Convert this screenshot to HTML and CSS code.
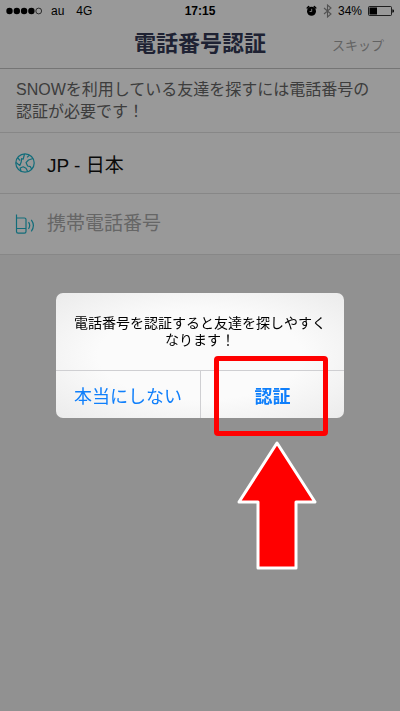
FILE: index.html
```html
<!DOCTYPE html>
<html lang="ja">
<head>
  <meta charset="UTF-8">
  <meta name="viewport" content="width=device-width, initial-scale=1">
  <title>電話番号認証</title>
  <link rel="stylesheet" href="styles.css">
</head>
<body>
  <div class="status-bar">
    <div class="status-left">
      <svg class="signal" width="37" height="8" viewBox="0 0 37 8">
        <circle cx="3.5" cy="4" r="3.2"/>
        <circle cx="10.8" cy="4" r="3.2"/>
        <circle cx="18.1" cy="4" r="3.2"/>
        <circle cx="25.4" cy="4" r="3.2"/>
        <circle cx="32.7" cy="4" r="2.9" fill="none" stroke="#000" stroke-width="0.7"/>
      </svg>
      <span>au</span>
      <span class="network">4G</span>
    </div>
    <div class="clock">17:15</div>
    <div class="status-right">
      <svg width="11" height="12" viewBox="0 0 11 12">
        <circle cx="5.5" cy="6.2" r="4.5"/>
        <path d="M1.200 3 2.700 1.600M9.800 3 8.300 1.600" stroke="#000" stroke-width="1.5" stroke-linecap="round"/>
        <path d="M5.700 3.800v2.700H3.600" fill="none" stroke="#ddd" stroke-width="0.9"/>
      </svg>
      <svg class="bluetooth" width="9" height="14" viewBox="0 0 9 14">
        <path d="M1 4l7 6-3.5 3V1L8 4 1 10" fill="none" stroke="#888" stroke-width="1.1"/>
      </svg>
      <span>34%</span>
      <svg class="battery" width="26" height="10" viewBox="0 0 26 10">
        <rect x=".5" y=".5" width="23" height="9" rx="1" fill="none" stroke="#000" stroke-width="0.8"/>
        <rect x="1.5" y="1.5" width="7.5" height="7"/>
        <path d="M24.4 3.2q1.6.2 1.6 1.8t-1.6 1.8z"/>
      </svg>
    </div>
  </div>

  <header class="nav">
    <h1>電話番号認証</h1>
    <button class="skip" type="button">スキップ</button>
  </header>

  <main class="form">
    <p class="lead">SNOWを利用している友達を探すには電話番号の認証が必要です！</p>
    <button class="row country" type="button">
      <svg width="20" height="20" viewBox="0 0 20 20">
        <circle cx="10" cy="10" r="9.200"/>
        <path d="M9.500 1 8.200 6.200 6.600 5.600 6.200 9 4.800 12.500 1 9.500M2.800 4.800 5 7.500M18 5.500 13.500 7 11 9.600 12.600 13 15.300 13.600 16.800 16.200M6 18.300 5.200 15 8.200 13.800 11 15.200 12.800 18.700M14.500 2.100 12 4.400"/>
      </svg>
      <span>JP - 日本</span>
    </button>
    <label class="row">
      <svg width="20" height="20" viewBox="0 0 20 20">
        <path d="M1.500 .5v17a1.600 1.600 0 0 0 1.600 1.600h6.300a1.600 1.600 0 0 0 1.600-1.600V5.600A1.600 1.600 0 0 0 9.400 4H1.500M1.500 14.500H11M13.500 8.200q2.400 3.400 0 6.800M16.300 5.800q4.200 5.800 0 11.600"/>
      </svg>
      <input type="tel" placeholder="携帯電話番号" aria-label="携帯電話番号">
    </label>
  </main>

  <div class="overlay">
    <div class="dialog" role="alertdialog" aria-labelledby="msg">
      <p id="msg" class="message">電話番号を認証すると友達を探しやすく<br>なります！</p>
      <div class="actions">
        <button type="button">本当にしない</button>
        <button class="primary" type="button">認証</button>
      </div>
      <div class="highlight"></div>
      <svg class="arrow" width="82" height="132" viewBox="0 0 82 132">
        <path d="M41 3 79 62H60v66H22V62H3z" fill="#f00" stroke="#fff" stroke-width="3" stroke-linejoin="round"/>
      </svg>
    </div>
  </div>
</body>
</html>
```

FILE: styles.css
```css
* {
  box-sizing: border-box;
}
body {
  margin: 0;
  min-height: 100vh;
  background: #f2f2f2;
  color: #000;
  font-family: "Liberation Sans", "Noto Sans CJK JP", sans-serif;
}
h1, p {
  margin: 0;
}
button, input {
  margin: 0;
  padding: 0;
  border: none;
  background: none;
  font-family: inherit;
}
svg {
  display: block;
  flex: none;
}

/* status bar */
.status-bar {
  display: grid;
  grid-template-columns: 1fr auto 1fr;
  align-items: center;
  height: 22px;
  padding: 0 6px;
  background: #fff;
  font-size: 12px;
}
.status-left, .status-right {
  display: flex;
  align-items: center;
  gap: 8px;
}
.status-right {
  justify-content: flex-end;
  gap: 6px;
}
.network {
  margin-left: 4px;
}
.clock {
  font-weight: bold;
}

/* title */
.nav {
  display: grid;
  grid-template-columns: 1fr auto 1fr;
  align-items: center;
  height: 47px;
  padding: 0 16px 2px;
  background: #fff;
  border-bottom: 1px solid #c4c4c4;
}
.nav h1 {
  grid-column: 2;
  color: #343a56;
  font-size: 22px;
  line-height: 32px;
}
.skip {
  justify-self: end;
  color: #a4a4a4;
  font-size: 13px;
}

/* form */
.form {
  background: #fff;
}
.lead {
  padding: 10px 16px 9px;
  border-bottom: 1px solid #e2e2e2;
  color: #666;
  font-size: 16px;
  line-height: 22px;
}
.row {
  display: flex;
  align-items: center;
  gap: 12px;
  width: 100%;
  height: 61px;
  padding: 0 15px;
  border-bottom: 1px solid #e2e2e2;
}
.row svg {
  fill: none;
  stroke: #1fb5cc;
  stroke-width: 1.2;
  stroke-linejoin: round;
}
.country {
  color: #111;
  font-size: 19px;
}
.row input {
  flex: 1;
  min-width: 0;
  font-size: 19px;
}
.row input::placeholder {
  color: #aaa;
  opacity: 1;
}

/* dialog */
.overlay {
  position: fixed;
  inset: 0;
  display: flex;
  align-items: center;
  justify-content: center;
  background: rgba(0, 0, 0, 0.4);
}
.dialog {
  position: relative;
  width: 72%;
  min-width: 288px;
  max-width: 320px;
  border-radius: 7px;
  background: radial-gradient(ellipse at center, #fbfbfb 50%, #ebebeb 100%);
}
.message {
  padding: 22px 0 21px;
  font-size: 14px;
  line-height: 17px;
  text-align: center;
  white-space: nowrap;
}
.actions {
  display: grid;
  grid-template-columns: 1fr 1fr;
  border-top: 1px solid #cfcfd2;
}
.actions button {
  height: 47px;
  color: #0f7ffb;
  font-size: 18px;
}
.actions .primary {
  border-left: 1px solid #cfcfd2;
  font-weight: bold;
}

/* tap here marker */
.highlight {
  position: absolute;
  right: 16px;
  bottom: -18px;
  width: 114px;
  height: 80px;
  border: 5px solid #f00;
  border-radius: 4px;
  pointer-events: none;
}
.arrow {
  position: absolute;
  top: 147px;
  right: 26px;
  pointer-events: none;
}
```
